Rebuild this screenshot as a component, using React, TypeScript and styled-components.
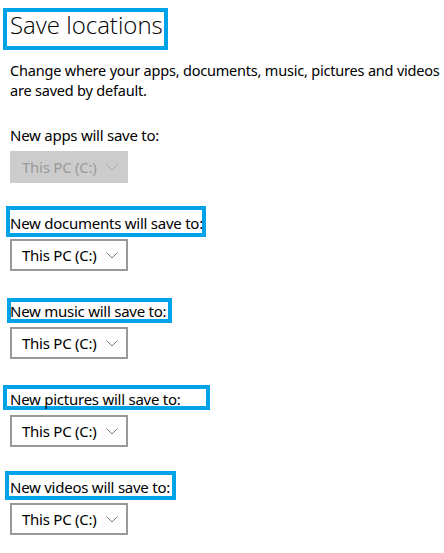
import * as React from "react";
import styled, { createGlobalStyle } from "styled-components";

const GlobalStyle = createGlobalStyle`
  html, body {
    margin: 0;
    padding: 0;
    background: #ffffff;
  }
  body {
    font-family: "Noto Sans", "Open Sans", sans-serif;
    color: #000000;
  }
`;

const Page = styled.div`
  padding: 0 0 0 10px;
  width: 444px;
  box-sizing: border-box;
`;

const TitleRow = styled.div`
  position: relative;
  height: 60px;
`;

const Title = styled.h1`
  position: relative;
  z-index: 1;
  margin: 0;
  padding-top: 9px;
  font-family: "Open Sans", "Noto Sans", sans-serif;
  font-weight: 300;
  font-size: 24px;
  line-height: 32px;
  color: #000000;
`;

const Description = styled.p`
  margin: 0;
  font-size: 14.5px;
  line-height: 20px;
  letter-spacing: -0.2px;
`;

const Section = styled.div<{ $first?: boolean }>`
  margin-top: ${(p) => (p.$first ? "24px" : "29px")};
`;

const LabelRow = styled.div`
  position: relative;
  height: 20px;
  margin-bottom: 7px;
`;

const Label = styled.span`
  position: relative;
  z-index: 1;
  font-size: 15px;
  line-height: 20px;
  letter-spacing: -0.25px;
`;

// hand-drawn annotation frame lying over the label
const Highlight = styled.div<{ $x: number; $y: number; $w: number; $h: number }>`
  position: absolute;
  left: ${(p) => p.$x}px;
  top: ${(p) => p.$y}px;
  width: ${(p) => p.$w}px;
  height: ${(p) => p.$h}px;
  box-sizing: border-box;
  border: 4px solid #00a2e8;
  background: #ffffff;
`;

const Dropdown = styled.div<{ $disabled?: boolean }>`
  display: flex;
  align-items: center;
  justify-content: space-between;
  box-sizing: border-box;
  width: 118px;
  height: 32px;
  padding: 0 8px 0 10px;
  border: 2px solid ${(p) => (p.$disabled ? "#cccccc" : "#999999")};
  background: ${(p) => (p.$disabled ? "#cccccc" : "#ffffff")};
  color: ${(p) => (p.$disabled ? "#9a9a9a" : "#000000")};
  font-size: 15px;
  letter-spacing: -0.25px;
`;

const Chevron = ({ color }: { color: string }) => (
  <svg width="12" height="7" viewBox="0 0 12 7">
    <path d="M0.5 0.5 L6 6 L11.5 0.5" fill="none" stroke={color} strokeWidth="1" />
  </svg>
);

type Frame = { x: number; y: number; w: number; h: number };

interface LocationProps {
  label: string;
  first?: boolean;
  disabled?: boolean;
  frame?: Frame;
}

const Location: React.FC<LocationProps> = ({ label, first, disabled, frame }) => (
  <Section $first={first}>
    <LabelRow>
      {frame && <Highlight $x={frame.x} $y={frame.y} $w={frame.w} $h={frame.h} />}
      <Label>{label}</Label>
    </LabelRow>
    <Dropdown $disabled={disabled}>
      <span>This PC (C:)</span>
      <Chevron color={disabled ? "#a8a8a8" : "#777777"} />
    </Dropdown>
  </Section>
);

export default function App() {
  return (
    <Page>
      <GlobalStyle />
      <TitleRow>
        <Highlight $x={-7} $y={8} $w={165} $h={42} />
        <Title>Save locations</Title>
      </TitleRow>
      <Description>
        Change where your apps, documents, music, pictures and videos are saved by
        default.
      </Description>
      <Location first label="New apps will save to:" disabled />
      <Location
        label="New documents will save to:"
        frame={{ x: -4, y: -6, w: 200, h: 31 }}
      />
      <Location
        label="New music will save to:"
        frame={{ x: -3, y: -2, w: 165, h: 25 }}
      />
      <Location
        label="New pictures will save to:"
        frame={{ x: -7, y: -3, w: 207, h: 25 }}
      />
      <Location
        label="New videos will save to:"
        frame={{ x: -5, y: -5, w: 171, h: 29 }}
      />
    </Page>
  );
}
